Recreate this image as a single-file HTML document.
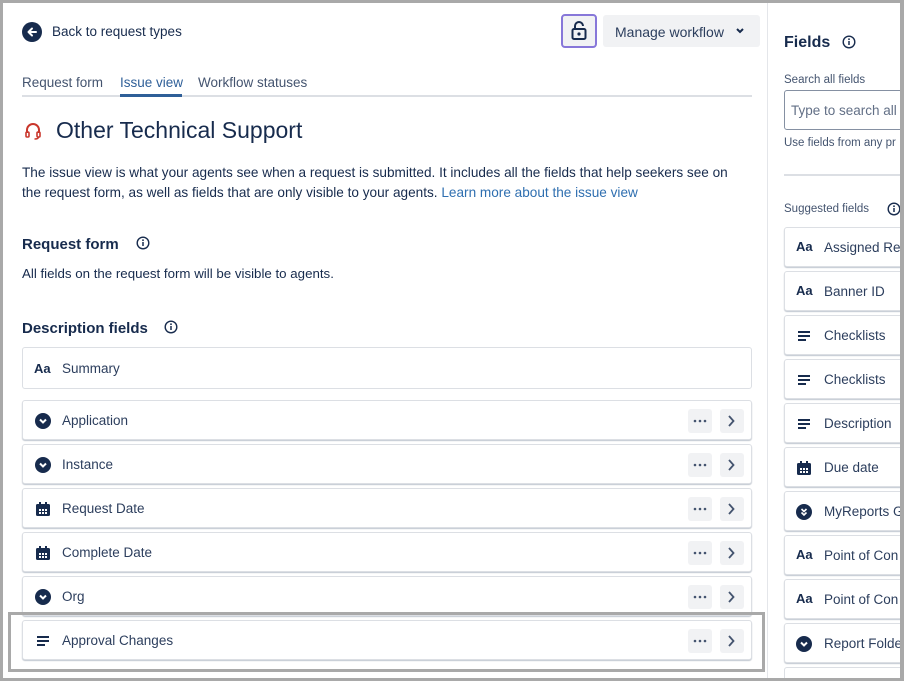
<!DOCTYPE html>
<html><head><meta charset="utf-8"><style>
*{box-sizing:border-box;margin:0;padding:0}
html{width:904px;height:681px;overflow:hidden}
body{width:904px;height:681px;overflow:hidden;background:#fff;font-family:"Liberation Sans",sans-serif;color:#172b4d;position:relative}
.a{position:absolute}
.t{font-size:13.5px;color:#172b4d;white-space:nowrap}
.row{position:absolute;left:22px;width:730px;height:40px;border:1px solid #dcdfe4;border-radius:3px;box-shadow:0 1px 1px rgba(9,30,66,.25);background:#fff}
.row .lbl{position:absolute;left:39px;top:12px;font-size:13.5px;color:#2c3e5d}
.row .ic{position:absolute;left:12px;top:12px}
.btn{position:absolute;top:8px;width:24px;height:24px;background:#f1f2f4;border-radius:3px}
.rc{position:absolute;left:784px;width:140px;height:40px;border:1px solid #dcdfe4;border-radius:3px;box-shadow:0 1px 1px rgba(9,30,66,.25);background:#fff}
.rc .lbl{position:absolute;left:39px;top:12px;font-size:13.5px;color:#2c3e5d;white-space:nowrap}
.rc .ic{position:absolute;left:11px;top:12px}
.aa{font-weight:bold;font-size:13px;color:#172b4d}
</style></head><body>
<svg class="a" style="left:22px;top:22px" width="20" height="20" viewBox="0 0 20 20"><circle cx="10" cy="10" r="10" fill="#172b4d"/><path d="M14 10H6.5M10 6.5L6.5 10l3.5 3.5" stroke="#fff" stroke-width="2" fill="none" stroke-linecap="round" stroke-linejoin="round"/></svg>
<div class="a t" style="left:52px;top:24px">Back to request types</div>
<div class="a" style="left:561px;top:14px;width:36px;height:34px;border:2px solid #8777d9;border-radius:4px;background:#f1f2f4"></div>
<svg class="a" style="left:570px;top:20px" width="18" height="22" viewBox="0 0 18 22"><path d="M5 9V6a4 4 0 0 1 8 0" stroke="#172b4d" stroke-width="2" fill="none"/><rect x="2.5" y="9" width="13" height="10" rx="1.5" stroke="#172b4d" stroke-width="2" fill="none"/><circle cx="9" cy="14" r="1.6" fill="#172b4d"/></svg>
<div class="a" style="left:603px;top:15px;width:157px;height:32px;background:#f1f2f4;border-radius:3px"></div>
<div class="a t" style="left:615px;top:24px;font-size:14px;color:#2c3e5d">Manage workflow</div>
<svg class="a" style="left:735px;top:27px" width="10" height="8" viewBox="0 0 10 8"><path d="M2 2l3 3 3-3" stroke="#172b4d" stroke-width="2" fill="none"/></svg>
<div class="a t" style="left:22px;top:75px;color:#44546f">Request form</div>
<div class="a t" style="left:120px;top:75px;color:#2f5f98">Issue view</div>
<div class="a t" style="left:198px;top:75px;color:#44546f">Workflow statuses</div>
<div class="a" style="left:22px;top:95px;width:730px;height:2px;background:#dcdfe4"></div>
<div class="a" style="left:120px;top:94px;width:62px;height:3px;background:#2f5f98"></div>
<svg class="a" style="left:23px;top:121px" width="20" height="20" viewBox="0 0 20 20"><path d="M4 12V9a6 6 0 0 1 12 0v3" stroke="#c9372c" stroke-width="2" fill="none"/><rect x="3" y="11" width="3" height="5" rx="1" stroke="#c9372c" stroke-width="1.6" fill="none"/><rect x="14" y="11" width="3" height="5" rx="1" stroke="#c9372c" stroke-width="1.6" fill="none"/><path d="M15.5 16c0 1.5-2 2-4 2" stroke="#c9372c" stroke-width="1.5" fill="none"/></svg>
<div class="a" style="left:56px;top:117px;font-size:23px;color:#172b4d;white-space:nowrap">Other Technical Support</div>
<div class="a" style="left:22px;top:163px;width:716px;font-size:13.6px;line-height:20px;color:#172b4d">The issue view is what your agents see when a request is submitted. It includes all the fields that help seekers see on the request form, as well as fields that are only visible to your agents. <span style="color:#2f6fb0">Learn more about the issue view</span></div>
<div class="a" style="left:22px;top:236px;font-size:15px;font-weight:bold;color:#172b4d">Request form</div>
<svg class="a" style="left:136px;top:236px" width="14" height="14" viewBox="0 0 14 14"><circle cx="7" cy="7" r="5.8" stroke="#172b4d" stroke-width="1.4" fill="none"/><path d="M7 6v4" stroke="#172b4d" stroke-width="1.5"/><circle cx="7" cy="4.2" r=".9" fill="#172b4d"/></svg>
<div class="a t" style="left:22px;top:266px;font-size:13.3px">All fields on the request form will be visible to agents.</div>
<div class="a" style="left:22px;top:320px;font-size:15px;font-weight:bold;color:#172b4d">Description fields</div>
<svg class="a" style="left:164px;top:320px" width="14" height="14" viewBox="0 0 14 14"><circle cx="7" cy="7" r="5.8" stroke="#172b4d" stroke-width="1.4" fill="none"/><path d="M7 6v4" stroke="#172b4d" stroke-width="1.5"/><circle cx="7" cy="4.2" r=".9" fill="#172b4d"/></svg>
<div class="a" style="left:22px;top:347px;width:730px;height:42px;border:1px solid #dcdfe4;border-radius:3px"></div>
<div class="a aa" style="left:34px;top:361px">Aa</div>
<div class="a t" style="left:62px;top:361px;color:#2c3e5d">Summary</div>

<div class="row" style="top:400px"><svg class="ic" width="16" height="16" viewBox="0 0 16 16"><circle cx="8" cy="8" r="8" fill="#172b4d"/><path d="M5 6.5l3 3 3-3" stroke="#fff" stroke-width="2" fill="none"/></svg><div class="lbl">Application</div><div class="btn" style="left:665px"></div><div class="btn" style="left:697px"></div></div>
<div class="row" style="top:444px"><svg class="ic" width="16" height="16" viewBox="0 0 16 16"><circle cx="8" cy="8" r="8" fill="#172b4d"/><path d="M5 6.5l3 3 3-3" stroke="#fff" stroke-width="2" fill="none"/></svg><div class="lbl">Instance</div><div class="btn" style="left:665px"></div><div class="btn" style="left:697px"></div></div>
<div class="row" style="top:488px"><svg class="ic" width="16" height="16" viewBox="0 0 16 16"><rect x="1" y="3" width="14" height="12" rx="1.5" fill="#172b4d"/><rect x="4" y="1" width="2" height="3" fill="#172b4d"/><rect x="10" y="1" width="2" height="3" fill="#172b4d"/><g fill="#fff"><rect x="4" y="8" width="2" height="2"/><rect x="7" y="8" width="2" height="2"/><rect x="10" y="8" width="2" height="2"/><rect x="4" y="11" width="2" height="2"/><rect x="7" y="11" width="2" height="2"/><rect x="10" y="11" width="2" height="2"/></g></svg><div class="lbl">Request Date</div><div class="btn" style="left:665px"></div><div class="btn" style="left:697px"></div></div>
<div class="row" style="top:532px"><svg class="ic" width="16" height="16" viewBox="0 0 16 16"><rect x="1" y="3" width="14" height="12" rx="1.5" fill="#172b4d"/><rect x="4" y="1" width="2" height="3" fill="#172b4d"/><rect x="10" y="1" width="2" height="3" fill="#172b4d"/><g fill="#fff"><rect x="4" y="8" width="2" height="2"/><rect x="7" y="8" width="2" height="2"/><rect x="10" y="8" width="2" height="2"/><rect x="4" y="11" width="2" height="2"/><rect x="7" y="11" width="2" height="2"/><rect x="10" y="11" width="2" height="2"/></g></svg><div class="lbl">Complete Date</div><div class="btn" style="left:665px"></div><div class="btn" style="left:697px"></div></div>
<div class="row" style="top:576px"><svg class="ic" width="16" height="16" viewBox="0 0 16 16"><circle cx="8" cy="8" r="8" fill="#172b4d"/><path d="M5 6.5l3 3 3-3" stroke="#fff" stroke-width="2" fill="none"/></svg><div class="lbl">Org</div><div class="btn" style="left:665px"></div><div class="btn" style="left:697px"></div></div>
<div class="row" style="top:620px"><svg class="ic" width="16" height="16" viewBox="0 0 16 16"><path d="M2 4h12M2 8h12M2 12h8" stroke="#172b4d" stroke-width="2"/></svg><div class="lbl">Approval Changes</div><div class="btn" style="left:665px"></div><div class="btn" style="left:697px"></div></div>

<svg class="a" style="left:0;top:0" width="904" height="681" viewBox="0 0 904 681">
<g fill="#44546f">
<circle cx="695" cy="421" r="1.3"/><circle cx="700" cy="421" r="1.3"/><circle cx="705" cy="421" r="1.3"/>
<circle cx="695" cy="465" r="1.3"/><circle cx="700" cy="465" r="1.3"/><circle cx="705" cy="465" r="1.3"/>
<circle cx="695" cy="509" r="1.3"/><circle cx="700" cy="509" r="1.3"/><circle cx="705" cy="509" r="1.3"/>
<circle cx="695" cy="553" r="1.3"/><circle cx="700" cy="553" r="1.3"/><circle cx="705" cy="553" r="1.3"/>
<circle cx="695" cy="597" r="1.3"/><circle cx="700" cy="597" r="1.3"/><circle cx="705" cy="597" r="1.3"/>
<circle cx="695" cy="641" r="1.3"/><circle cx="700" cy="641" r="1.3"/><circle cx="705" cy="641" r="1.3"/>
</g>
<g stroke="#44546f" stroke-width="1.8" fill="none">
<path d="M729 416l4.5 5-4.5 5"/><path d="M729 460l4.5 5-4.5 5"/><path d="M729 504l4.5 5-4.5 5"/><path d="M729 548l4.5 5-4.5 5"/><path d="M729 592l4.5 5-4.5 5"/><path d="M729 636l4.5 5-4.5 5"/>
</g>
</svg>

<div class="a" style="left:767px;top:0;width:137px;height:681px;background:#fff;border-left:1px solid #e4e6ea"></div>
<div class="a" style="left:784px;top:34px;font-size:16px;font-weight:bold;color:#172b4d">Fields</div>
<svg class="a" style="left:842px;top:35px" width="14" height="14" viewBox="0 0 14 14"><circle cx="7" cy="7" r="5.8" stroke="#172b4d" stroke-width="1.4" fill="none"/><path d="M7 6v4" stroke="#172b4d" stroke-width="1.5"/><circle cx="7" cy="4.2" r=".9" fill="#172b4d"/></svg>
<div class="a" style="left:784px;top:74px;font-size:11.5px;color:#44546f;white-space:nowrap">Search all fields</div>
<div class="a" style="left:784px;top:90px;width:140px;height:40px;border:1px solid #8590a2;border-radius:3px"></div>
<div class="a" style="left:791px;top:103px;font-size:13.5px;color:#626f86;white-space:nowrap">Type to search all</div>
<div class="a" style="left:784px;top:137px;font-size:11.5px;color:#44546f;white-space:nowrap">Use fields from any pr</div>
<div class="a" style="left:784px;top:174px;width:130px;height:2px;background:#dcdfe4"></div>
<div class="a" style="left:784px;top:203px;font-size:11.5px;color:#44546f;white-space:nowrap">Suggested fields</div>
<svg class="a" style="left:887px;top:202px" width="14" height="14" viewBox="0 0 14 14"><circle cx="7" cy="7" r="5.8" stroke="#172b4d" stroke-width="1.4" fill="none"/><path d="M7 6v4" stroke="#172b4d" stroke-width="1.5"/><circle cx="7" cy="4.2" r=".9" fill="#172b4d"/></svg>

<div class="rc" style="top:227px"><div class="ic aa" style="top:11px">Aa</div><div class="lbl">Assigned Rep</div></div>
<div class="rc" style="top:271px"><div class="ic aa" style="top:11px">Aa</div><div class="lbl">Banner ID</div></div>
<div class="rc" style="top:315px"><svg class="ic" width="16" height="16" viewBox="0 0 16 16"><path d="M2 4h12M2 8h12M2 12h8" stroke="#172b4d" stroke-width="2"/></svg><div class="lbl">Checklists</div></div>
<div class="rc" style="top:359px"><svg class="ic" width="16" height="16" viewBox="0 0 16 16"><path d="M2 4h12M2 8h12M2 12h8" stroke="#172b4d" stroke-width="2"/></svg><div class="lbl">Checklists</div></div>
<div class="rc" style="top:403px"><svg class="ic" width="16" height="16" viewBox="0 0 16 16"><path d="M2 4h12M2 8h12M2 12h8" stroke="#172b4d" stroke-width="2"/></svg><div class="lbl">Description</div></div>
<div class="rc" style="top:447px"><svg class="ic" width="16" height="16" viewBox="0 0 16 16"><rect x="1" y="3" width="14" height="12" rx="1.5" fill="#172b4d"/><rect x="4" y="1" width="2" height="3" fill="#172b4d"/><rect x="10" y="1" width="2" height="3" fill="#172b4d"/><g fill="#fff"><rect x="4" y="8" width="2" height="2"/><rect x="7" y="8" width="2" height="2"/><rect x="10" y="8" width="2" height="2"/><rect x="4" y="11" width="2" height="2"/><rect x="7" y="11" width="2" height="2"/><rect x="10" y="11" width="2" height="2"/></g></svg><div class="lbl">Due date</div></div>
<div class="rc" style="top:491px"><svg class="ic" width="16" height="16" viewBox="0 0 16 16"><circle cx="8" cy="8" r="8" fill="#172b4d"/><path d="M5.5 5l2.5 2.5 2.5-2.5M5.5 8.5l2.5 2.5 2.5-2.5" stroke="#fff" stroke-width="1.6" fill="none"/></svg><div class="lbl">MyReports G</div></div>
<div class="rc" style="top:535px"><div class="ic aa" style="top:11px">Aa</div><div class="lbl">Point of Con</div></div>
<div class="rc" style="top:579px"><div class="ic aa" style="top:11px">Aa</div><div class="lbl">Point of Con</div></div>
<div class="rc" style="top:623px"><svg class="ic" width="16" height="16" viewBox="0 0 16 16"><circle cx="8" cy="8" r="8" fill="#172b4d"/><path d="M5 6.5l3 3 3-3" stroke="#fff" stroke-width="2" fill="none"/></svg><div class="lbl">Report Folder</div></div>
<div class="rc" style="top:667px;height:14px;border-bottom:none;box-shadow:none"></div>

<div class="a" style="left:8px;top:612px;width:757px;height:60px;border:3px solid #a9a9a9"></div>
<div class="a" style="left:0;top:0;width:904px;height:681px;border:3px solid #a9a9a9;border-right-width:4px"></div>
</body></html>
